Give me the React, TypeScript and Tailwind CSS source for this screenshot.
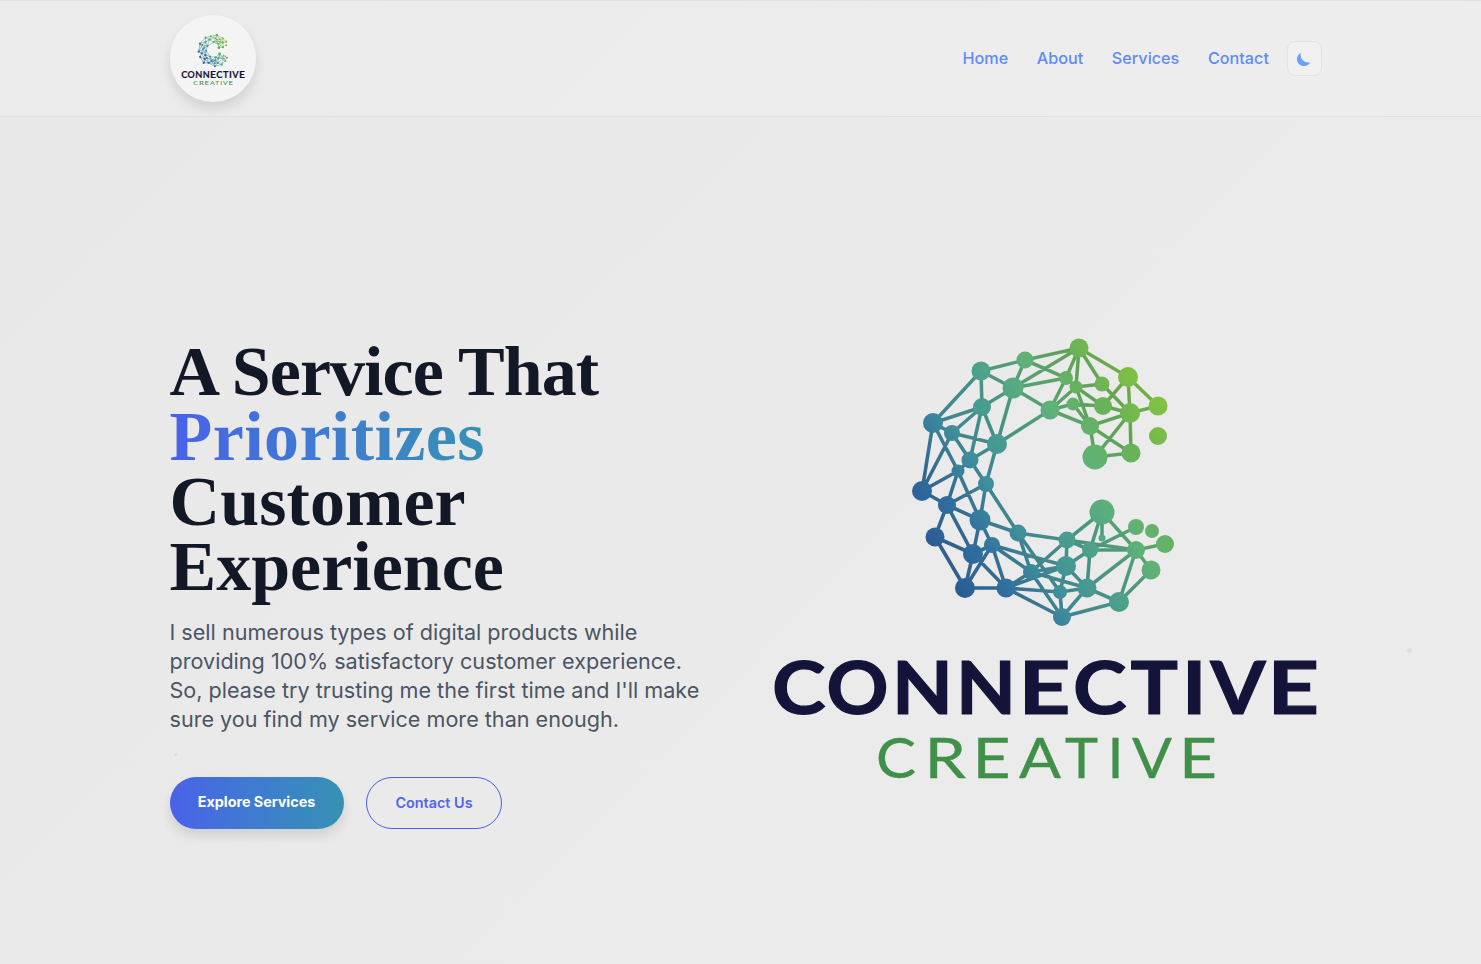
const nodes: [number, number, number][] = [
  [1079,348,9.5],[1025,360,8.5],[981,371,9.5],[1013,388,10.5],[1066,378,7],[1128,377,10],[1102,384,7.5],[1158,406,9.5],[1130,413,10],[1103,406,9],[1073,404,6.5],[1076,387,6.5],[1050,410,9.5],[1090,426,9],[982,407,9],[933,423,10],[952,433,8],[997,444,10],[970,460,8.5],[958,471,6.5],[986,484,8],[1095,457,12.5],[1131,453,9.5],[1158,436,9],[922,491,10],[947,505,9],[980,520,10.5],[935,537,9.5],[973,554,10],[992,545,8],[1018,533,8.5],[965,588,10],[1006,588,9.5],[1031,572,8],[1067,540,8.5],[1066,566,10],[1090,550,8],[1102,512,12.5],[1102,538,3.5],[1136,527,8],[1152,531,7],[1165,544,9],[1136,550,9],[1151,570,9.5],[1087,588,9.5],[1060,592,7],[1119,602,10],[1062,617,9],
];
const edges: [number, number][] = [
  [0,1],[0,3],[0,4],[0,11],[0,6],[0,5],[1,2],[1,3],[1,4],[2,3],[2,14],[2,15],[3,14],[3,4],[3,12],[3,17],[4,12],[4,11],[5,7],[5,8],[5,9],[6,11],[6,8],[7,8],[8,9],[8,13],[8,21],[8,22],[9,10],[9,11],[10,12],[10,13],[11,12],[11,13],[12,13],[12,17],[13,21],[13,22],[21,22],
  [14,15],[14,16],[14,17],[14,18],[15,16],[15,24],[15,19],[16,17],[16,24],[16,18],[17,18],[17,20],[18,19],[18,20],[19,24],[19,25],[19,26],[20,25],[20,26],[20,30],[24,25],[25,26],[25,27],[25,28],[26,28],[26,29],[26,30],[27,28],[27,31],[28,29],[28,31],[28,32],[29,31],[29,32],[29,33],[29,35],[30,33],[30,34],[30,45],[31,32],[32,33],[32,45],[32,47],[32,35],[33,34],[33,35],[33,44],[33,47],
  [34,35],[34,36],[34,37],[34,42],[35,36],[35,44],[35,45],[36,37],[36,42],[36,44],[37,38],[37,42],[36,39],[41,42],[42,43],[42,44],[42,46],[43,46],[44,45],[44,46],[44,47],[45,47],[46,47],
];
const edgePath = edges.map(([a, b]) => `M${nodes[a][0]} ${nodes[a][1]}L${nodes[b][0]} ${nodes[b][1]}`).join("");

type Glyph = [string, number, number];
const top: Glyph[] = [["C",772,53.5],["O",826.5,62],["N",892,61],["N",956,60],["E",1018.5,52],["C",1073,53.5],["T",1130.5,47.5],["I",1182,24.5],["V",1210.5,55],["E",1267.5,51.5]];
const bottom: Glyph[] = [["C",876,40],["R",924.5,41.5],["E",972.5,38],["A",1019,42],["T",1065,33],["I",1107.5,16],["V",1132,40],["E",1179,38]];

function Logo({ id, className }: { id: string; className: string }) {
  return (
    <svg viewBox="770 324 550 470" className={className} role="img" aria-label="Connective Creative">
      <defs>
        <linearGradient id={id} gradientUnits="userSpaceOnUse" x1="935" y1="565" x2="1165" y2="420">
          <stop offset="0" stopColor="#295a93" />
          <stop offset="0.17" stopColor="#306e9e" />
          <stop offset="0.33" stopColor="#408f9b" />
          <stop offset="0.53" stopColor="#4ea38a" />
          <stop offset="0.67" stopColor="#5fb178" />
          <stop offset="0.84" stopColor="#69b259" />
          <stop offset="1" stopColor="#80c043" />
        </linearGradient>
      </defs>
      <path d={edgePath} fill="none" stroke={`url(#${id})`} strokeWidth="3.6" />
      <path d={edgePath} fill="none" stroke="#4c5f5f" strokeOpacity="0.22" strokeWidth="2.6" />
      <g fill={`url(#${id})`}>
        {nodes.map(([x, y, r]) => (
          <circle key={`${x}-${y}`} cx={x} cy={y} r={r} />
        ))}
      </g>
      <text y="714" fontFamily="Lato, sans-serif" fontWeight="700" fontSize="73" fill="#14143a" stroke="#14143a" strokeWidth="1.2">
        {top.map(([c, x, w]) => (
          <tspan key={x} x={x} textLength={w} lengthAdjust="spacingAndGlyphs">{c}</tspan>
        ))}
      </text>
      <text y="778" fontFamily="Lato, sans-serif" fontWeight="400" fontSize="56" fill="#40904a" stroke="#40904a" strokeWidth="0.4">
        {bottom.map(([c, x, w]) => (
          <tspan key={x} x={x} textLength={w} lengthAdjust="spacingAndGlyphs">{c}</tspan>
        ))}
      </text>
    </svg>
  );
}

export default function App() {
  return (
    <div className="relative flex h-[964px] flex-col overflow-hidden bg-[linear-gradient(135deg,#e8e8e8,#ececec)] font-[Inter,sans-serif]">
      <header className="h-[117px] shrink-0 border-y border-[#e1e1e1] bg-white/15">
        <div className="mx-auto flex h-full w-[1152px] translate-x-[5px] items-center justify-between">
          <div className="flex h-[87px] w-[86px] items-center justify-center rounded-full bg-[#f4f4f4] shadow-[0_7px_12px_rgba(0,0,0,0.11)]">
            <Logo id="brand-small" className="h-[55px] w-[64px] translate-y-px" />
          </div>
          <nav className="flex items-center text-[16.2px] font-medium text-[#608af5]">
            <a className="mr-[28.6px]">Home</a>
            <a className="mr-[28.6px]">About</a>
            <a className="mr-[28.6px]">Services</a>
            <a className="mr-[17.6px]">Contact</a>
            <button aria-label="Toggle theme" className="flex size-[35px] items-center justify-center rounded-lg border border-[#e3e3e3] bg-[#f0f0f0]">
              <svg viewBox="0 0 14 14" className="size-[14px] -translate-x-[0.5px] translate-y-[0.5px]">
                <path d="M4.4.3A7 7 0 1 0 13.7 9.7 7.6 7.6 0 0 1 4.4.3Z" fill="#6ba0fb" />
              </svg>
            </button>
          </nav>
        </div>
      </header>
      <main className="mx-auto flex w-[1152px] grow translate-x-[5px] justify-between">
        <section className="w-[540px] pt-[222px]">
          <h1 className="font-['Liberation_Serif',serif] text-[70px] leading-[65px] font-bold whitespace-nowrap text-[#121826]">
            <span className="block tracking-[-0.95px]">A Service That</span>
            <span className="block w-[315px] bg-linear-to-r from-[#4961e9] to-[#3691b3] bg-clip-text tracking-[0.4px] text-transparent">Prioritizes</span>
            <span className="block tracking-[0.1px]">Customer</span>
            <span className="block">Experience</span>
          </h1>
          <p className="mt-[19px] text-[21.6px] leading-[29px] whitespace-nowrap text-[#4b5563]">
            I sell numerous types of digital products while<br />
            providing 100% satisfactory customer experience.<br />
            So, please try trusting me the first time and I'll make<br />
            sure you find my service more than enough.
          </p>
          <div className="mt-[43px] flex gap-[22px] text-[14.4px]">
            <button className="h-[52px] w-[174px] rounded-full bg-linear-to-r from-[#4961e9] to-[#3691b3] pb-[2px] font-bold tracking-[-0.04px] text-white shadow-[0_7px_12px_rgba(0,0,0,0.11)]">Explore Services</button>
            <button className="h-[52px] w-[136px] rounded-full border border-[#4961e9] pl-px font-semibold text-[#5265e8]">Contact Us</button>
          </div>
        </section>
        <Logo id="brand-large" className="mt-[207px] mr-[2px] h-[470px] w-[550px]" />
      </main>
      <span className="absolute top-[753px] left-[174px] size-[3px] rounded-full bg-[#dcdce9]" />
      <span className="absolute top-[648px] left-[1407px] size-[5px] rounded-full bg-[#d3e3e8]" />
    </div>
  );
}
